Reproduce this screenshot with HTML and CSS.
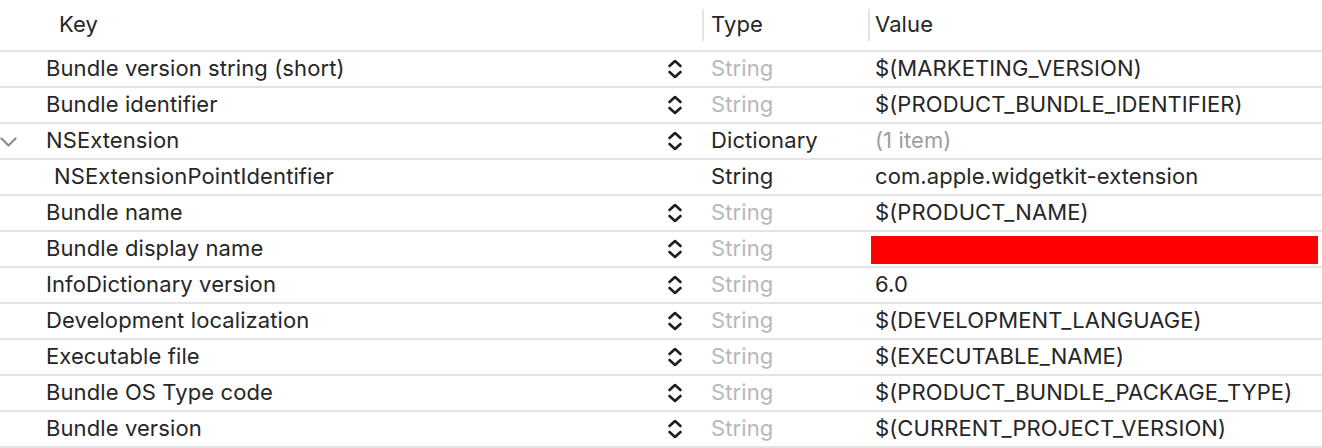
FILE: index.html
```html
<!DOCTYPE html>
<html>
<head>
<meta charset="utf-8">
<link rel="stylesheet" href="styles.css">
</head>
<body>
<div class="table">
  <div class="header">
    <div class="h-key">Key</div>
    <div class="h-type">Type</div>
    <div class="h-value">Value</div>
  </div>
  <div class="row"><div class="disc"></div><div class="key">Bundle version string (short)</div><div class="step"><svg viewBox="0 0 16 22" class="stepper"><path d="M2.5 8 L8 3 L13.5 8 M2.5 14 L8 19 L13.5 14" /></svg></div><div class="type dim">String</div><div class="value">$(MARKETING_VERSION)</div></div>
  <div class="row"><div class="disc"></div><div class="key">Bundle identifier</div><div class="step"><svg viewBox="0 0 16 22" class="stepper"><path d="M2.5 8 L8 3 L13.5 8 M2.5 14 L8 19 L13.5 14" /></svg></div><div class="type dim">String</div><div class="value">$(PRODUCT_BUNDLE_IDENTIFIER)</div></div>
  <div class="row"><div class="disc"><svg viewBox="0 0 20 12" class="chev"><path d="M2.5 2.5 L9.5 9.5 L16.5 2.5" /></svg></div><div class="key">NSExtension</div><div class="step"><svg viewBox="0 0 16 22" class="stepper"><path d="M2.5 8 L8 3 L13.5 8 M2.5 14 L8 19 L13.5 14" /></svg></div><div class="type">Dictionary</div><div class="value muted">(1 item)</div></div>
  <div class="row"><div class="disc"></div><div class="key sub">NSExtensionPointIdentifier</div><div class="step"></div><div class="type">String</div><div class="value">com.apple.widgetkit-extension</div></div>
  <div class="row"><div class="disc"></div><div class="key">Bundle name</div><div class="step"><svg viewBox="0 0 16 22" class="stepper"><path d="M2.5 8 L8 3 L13.5 8 M2.5 14 L8 19 L13.5 14" /></svg></div><div class="type dim">String</div><div class="value">$(PRODUCT_NAME)</div></div>
  <div class="row"><div class="disc"></div><div class="key">Bundle display name</div><div class="step"><svg viewBox="0 0 16 22" class="stepper"><path d="M2.5 8 L8 3 L13.5 8 M2.5 14 L8 19 L13.5 14" /></svg></div><div class="type dim">String</div><div class="value"><div class="redact"></div></div></div>
  <div class="row"><div class="disc"></div><div class="key">InfoDictionary version</div><div class="step"><svg viewBox="0 0 16 22" class="stepper"><path d="M2.5 8 L8 3 L13.5 8 M2.5 14 L8 19 L13.5 14" /></svg></div><div class="type dim">String</div><div class="value">6.0</div></div>
  <div class="row"><div class="disc"></div><div class="key">Development localization</div><div class="step"><svg viewBox="0 0 16 22" class="stepper"><path d="M2.5 8 L8 3 L13.5 8 M2.5 14 L8 19 L13.5 14" /></svg></div><div class="type dim">String</div><div class="value">$(DEVELOPMENT_LANGUAGE)</div></div>
  <div class="row"><div class="disc"></div><div class="key">Executable file</div><div class="step"><svg viewBox="0 0 16 22" class="stepper"><path d="M2.5 8 L8 3 L13.5 8 M2.5 14 L8 19 L13.5 14" /></svg></div><div class="type dim">String</div><div class="value">$(EXECUTABLE_NAME)</div></div>
  <div class="row"><div class="disc"></div><div class="key">Bundle OS Type code</div><div class="step"><svg viewBox="0 0 16 22" class="stepper"><path d="M2.5 8 L8 3 L13.5 8 M2.5 14 L8 19 L13.5 14" /></svg></div><div class="type dim">String</div><div class="value">$(PRODUCT_BUNDLE_PACKAGE_TYPE)</div></div>
  <div class="row"><div class="disc"></div><div class="key">Bundle version</div><div class="step"><svg viewBox="0 0 16 22" class="stepper"><path d="M2.5 8 L8 3 L13.5 8 M2.5 14 L8 19 L13.5 14" /></svg></div><div class="type dim">String</div><div class="value">$(CURRENT_PROJECT_VERSION)</div></div>
</div>
</body>
</html>
```

FILE: styles.css
```css
html, body {
  margin: 0;
  padding: 0;
  background: #ffffff;
}
body {
  font-family: Inter, "Helvetica Neue", Arial, sans-serif;
  font-size: 22px;
  letter-spacing: 0.1px;
  color: #262626;
  width: 1322px;
  height: 448px;
  overflow: hidden;
}
.table {
  display: flex;
  flex-direction: column;
}
.header {
  display: grid;
  grid-template-columns: 702px 166px 1fr;
  height: 50px;
  border-bottom: 2px solid #e4e4e4;
  align-items: center;
}
.h-key {
  padding-left: 59px;
  padding-bottom: 2px;
}
.h-type, .h-value {
  border-left: 2px solid #e4e4e4;
  height: 32px;
  line-height: 30px;
}
.h-type { padding-left: 7px; }
.h-value { padding-left: 5px; }
.row {
  display: grid;
  grid-template-columns: 46px 614px 42px 166px 1fr;
  height: 34px;
  border-bottom: 2px solid #e4e4e4;
  align-items: center;
  white-space: nowrap;
}
.key, .type {
  padding-bottom: 2px;
}
.disc {
  display: flex;
  align-items: center;
  height: 100%;
}
.chev {
  width: 20px;
  height: 12px;
  margin-left: -1px;
  margin-top: 2px;
}
.chev path {
  fill: none;
  stroke: #8c8c8c;
  stroke-width: 2.2;
  stroke-linecap: round;
  stroke-linejoin: round;
}
.key.sub {
  padding-left: 8px;
}
.step {
  display: flex;
  align-items: center;
  height: 100%;
}
.stepper {
  width: 16px;
  height: 22px;
  margin-left: 7px;
}
.stepper path {
  fill: none;
  stroke: #1e1e1e;
  stroke-width: 2.6;
  stroke-linecap: round;
  stroke-linejoin: round;
}
.type {
  padding-left: 9px;
}
.type.dim {
  color: #b8b8b8;
}
.value {
  padding-left: 7px;
  padding-bottom: 2px;
  box-sizing: border-box;
  display: flex;
  align-items: center;
  height: 100%;
}
.value.muted {
  color: #9e9e9e;
}
.redact {
  width: 447px;
  height: 28px;
  margin-left: -4px;
  margin-top: 3px;
  background: #ff0000;
}
```
